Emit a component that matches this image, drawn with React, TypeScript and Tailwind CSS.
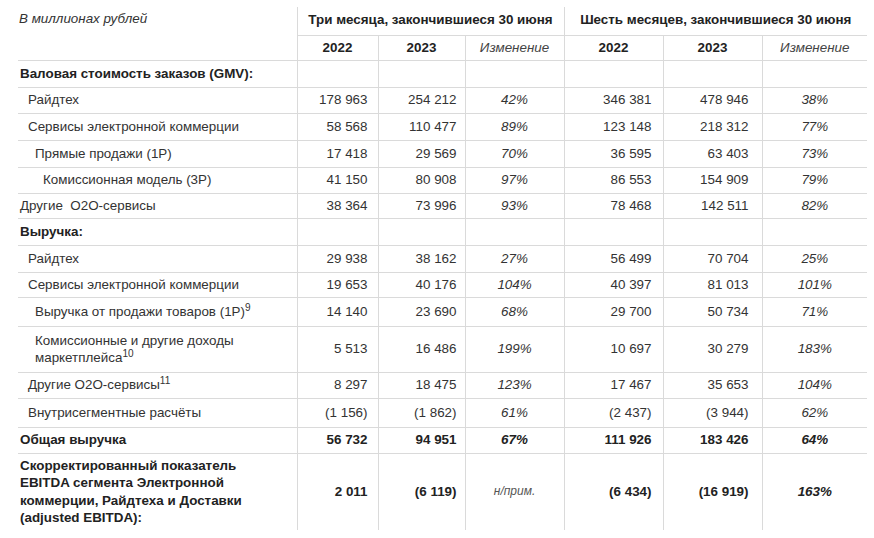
import React from 'react';

type Row = {
  label: React.ReactNode;
  level: 0 | 1 | 2 | 3;
  h: string;
  bold?: boolean;
  values?: string[];
};

const indent = ['pl-[2px]', 'pl-[10px]', 'pl-[17px]', 'pl-[25px]'];

const rows: Row[] = [
  { label: 'Валовая стоимость заказов (GMV):', level: 0, h: 'h-[27px]', bold: true },
  { label: 'Райдтех', level: 1, h: 'h-[26px]', values: ['178 963', '254 212', '42%', '346 381', '478 946', '38%'] },
  { label: 'Сервисы электронной коммерции', level: 1, h: 'h-[27px]', values: ['58 568', '110 477', '89%', '123 148', '218 312', '77%'] },
  { label: 'Прямые продажи (1P)', level: 2, h: 'h-[27px]', values: ['17 418', '29 569', '70%', '36 595', '63 403', '73%'] },
  { label: 'Комиссионная модель (3P)', level: 3, h: 'h-[26px]', values: ['41 150', '80 908', '97%', '86 553', '154 909', '79%'] },
  { label: 'Другие\u00a0 О2О-сервисы', level: 0, h: 'h-[25px]', values: ['38 364', '73 996', '93%', '78 468', '142 511', '82%'] },
  { label: 'Выручка:', level: 0, h: 'h-[27px]', bold: true },
  { label: 'Райдтех', level: 1, h: 'h-[27px]', values: ['29 938', '38 162', '27%', '56 499', '70 704', '25%'] },
  { label: 'Сервисы электронной коммерции', level: 1, h: 'h-[25px]', values: ['19 653', '40 176', '104%', '40 397', '81 013', '101%'] },
  {
    label: (
      <>
        Выручка от продажи товаров (1P)<sup>9</sup>
      </>
    ),
    level: 2,
    h: 'h-[29px]',
    values: ['14 140', '23 690', '68%', '29 700', '50 734', '71%'],
  },
  {
    label: (
      <>
        Комиссионные и другие доходы
        <br />
        маркетплейса<sup>10</sup>
      </>
    ),
    level: 2,
    h: 'h-[46px]',
    values: ['5 513', '16 486', '199%', '10 697', '30 279', '183%'],
  },
  {
    label: (
      <>
        Другие О2О-сервисы<sup>11</sup>
      </>
    ),
    level: 1,
    h: 'h-[26px]',
    values: ['8 297', '18 475', '123%', '17 467', '35 653', '104%'],
  },
  { label: 'Внутрисегментные расчёты', level: 1, h: 'h-[29px]', values: ['(1 156)', '(1 862)', '61%', '(2 437)', '(3 944)', '62%'] },
  { label: 'Общая выручка', level: 0, h: 'h-[26px]', bold: true, values: ['56 732', '94 951', '67%', '111 926', '183 426', '64%'] },
  {
    label: (
      <>
        Скорректированный показатель
        <br />
        EBITDA сегмента Электронной
        <br />
        коммерции, Райдтеха и Доставки
        <br />
        (adjusted EBITDA):
      </>
    ),
    level: 0,
    h: 'h-[77px]',
    bold: true,
    values: ['2 011', '(6 119)', 'н/прим.', '(6 434)', '(16 919)', '163%'],
  },
];

const numPad = ['pr-[10px]', 'pr-[8px]', '', 'pr-[11px]', 'pr-[13px]', ''];

export default function App() {
  return (
    <div className="w-[874px] h-[538px] bg-white overflow-hidden font-['Liberation_Sans',Arial,sans-serif] text-[13.4px] leading-[17.5px] text-[#333]">
      <table className="ml-[18px] mt-[7px] w-[849px] table-fixed border-collapse">
        <colgroup>
          <col className="w-[279px]" />
          <col className="w-[81px]" />
          <col className="w-[87px]" />
          <col className="w-[99px]" />
          <col className="w-[99px]" />
          <col className="w-[99px]" />
          <col className="w-[105px]" />
        </colgroup>
        <thead>
          <tr className="h-[28px]">
            <th
              rowSpan={2}
              className="border-r border-[#dadada] pl-[1px] pt-[3px] text-left align-top font-normal italic"
            >
              В миллионах рублей
            </th>
            <th colSpan={3} className="border-r border-b border-[#dadada] pb-[2px] text-center font-bold text-[#222]">
              Три месяца, закончившиеся 30 июня
            </th>
            <th colSpan={3} className="border-b border-[#dadada] pb-[2px] text-center font-bold text-[#222]">
              Шесть месяцев, закончившиеся 30 июня
            </th>
          </tr>
          <tr className="h-[25px] border-b border-[#dadada]">
            <th className="border-r border-[#dadada] text-center font-bold text-[#222]">2022</th>
            <th className="border-r border-[#dadada] text-center font-bold text-[#222]">2023</th>
            <th className="border-r border-[#dadada] text-center font-normal italic text-[#444]">Изменение</th>
            <th className="border-r border-[#dadada] text-center font-bold text-[#222]">2022</th>
            <th className="border-r border-[#dadada] text-center font-bold text-[#222]">2023</th>
            <th className="text-center font-normal italic text-[#444]">Изменение</th>
          </tr>
        </thead>
        <tbody>
          {rows.map((row, i) => (
            <tr key={i} className={`${row.h} ${i < rows.length - 1 ? 'border-b border-[#dadada]' : ''}`}>
              <td
                className={`border-r border-[#dadada] ${indent[row.level]} align-middle ${
                  row.bold ? 'font-bold text-[#222]' : ''
                }`}
              >
                {row.label}
              </td>
              {[0, 1, 2, 3, 4, 5].map((c) => {
                const v = row.values ? row.values[c] : '';
                const isPct = c === 2 || c === 5;
                const na = v === 'н/прим.';
                return (
                  <td
                    key={c}
                    className={`${c < 5 ? 'border-r border-[#dadada]' : ''} align-middle ${
                      isPct ? 'text-center italic' : `text-right ${numPad[c]}`
                    } ${row.bold && !na ? 'font-bold text-[#222]' : ''} ${na ? 'text-[12px] text-[#555]' : ''}`}
                  >
                    {v}
                  </td>
                );
              })}
            </tr>
          ))}
        </tbody>
      </table>
    </div>
  );
}
